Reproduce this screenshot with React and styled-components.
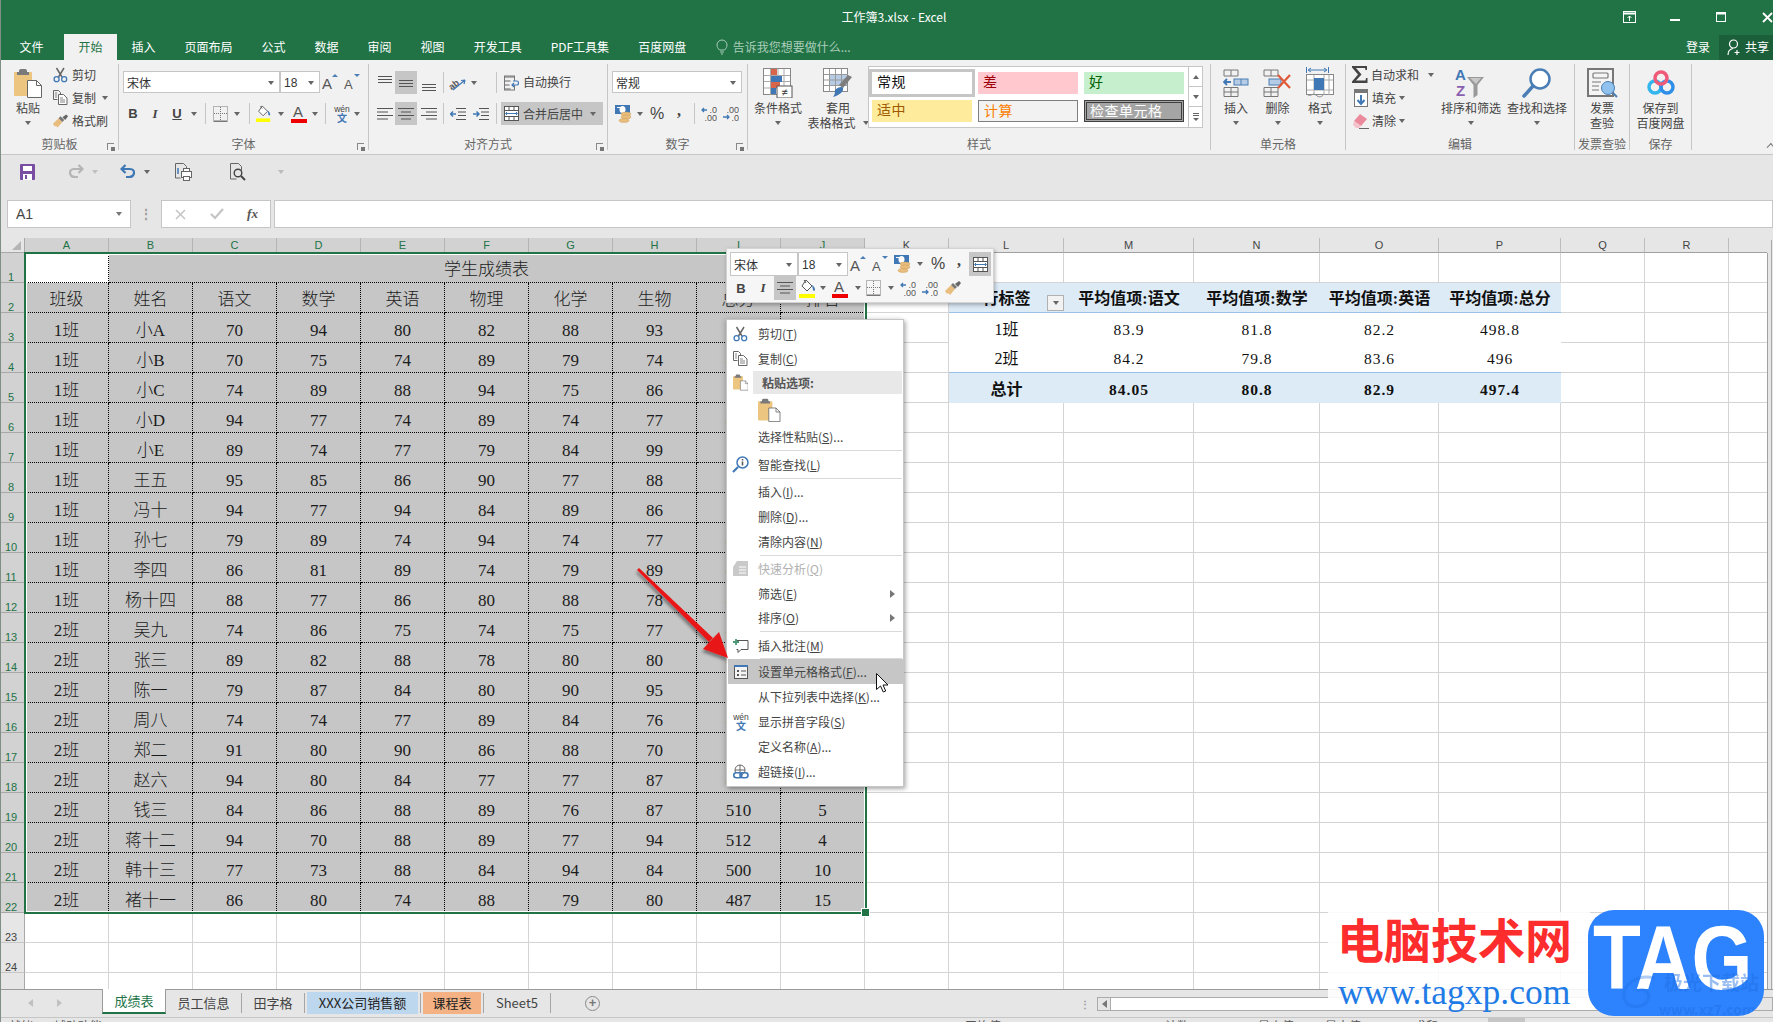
import React from "react";
import styled, { createGlobalStyle } from "styled-components";

const GlobalStyle = createGlobalStyle`
  html, body { margin: 0; padding: 0; background: #e6e6e6; }
  * { box-sizing: border-box; }
`;

const UI_FONT = `"Noto Sans CJK SC", "Liberation Sans", sans-serif`;
const CELL_FONT = `"Liberation Serif", "Noto Sans CJK SC", serif`;
const GREEN = "#217346";

const Page = styled.div`
  position: relative;
  width: 1773px;
  height: 1022px;
  overflow: hidden;
  background: #e6e6e6;
  border-left: 1px solid #7f8f86;
  font-family: ${UI_FONT};
  font-size: 12px;
  line-height: 16px;
  color: #444;
  display: flex;
  flex-direction: column;
`;

/* ---------- title bar and tabs ---------- */
const TitleBar = styled.div`
  height: 34px;
  flex: none;
  background: ${GREEN};
  color: #fff;
  display: flex;
  align-items: center;
  padding-left: 837px;
`;
const TitleText = styled.div`
  width: 112px;
  text-align: center;
  white-space: nowrap;
`;
const WindowButtons = styled.div`
  margin-left: auto;
  display: flex;
  align-items: center;
  margin-right: -17px;
`;
const WindowBtn = styled.div`
  width: 46px;
  display: flex;
  justify-content: center;
`;
const TabRow = styled.div`
  height: 26px;
  flex: none;
  background: ${GREEN};
  display: flex;
  padding-left: 4px;
`;
const Tab = styled.div`
  height: 26px;
  padding: 0 14.5px;
  line-height: 26px;
  color: ${(p) => (p.$active ? GREEN : "#fff")};
  background: ${(p) => (p.$active ? "#f1f1f1" : "transparent")};
  margin-right: ${(p) => p.$mr || 0}px;
  white-space: nowrap;
`;
const TellMe = styled.div`
  margin-left: 15px;
  display: flex;
  align-items: center;
  gap: 5px;
  color: #a9cdb9;
`;
const AccountArea = styled.div`
  margin-left: auto;
  display: flex;
  align-items: center;
  color: #fff;
`;
const Login = styled.div`
  width: 53px;
  padding-left: 20px;
`;
const ShareBtn = styled.div`
  width: 54px;
  height: 25px;
  background: #1b5e3a;
  display: flex;
  align-items: center;
  gap: 3px;
  padding-left: 8px;
  white-space: nowrap;
`;

/* ---------- ribbon ---------- */
const Ribbon = styled.div`
  height: 95px;
  flex: none;
  background: #f1f1f1;
  border-bottom: 1px solid #c6c6c6;
  padding-top: 4px;
  display: flex;
  align-items: flex-start;
`;
const Group = styled.div`
  width: ${(p) => p.$w}px;
  height: 86px;
  flex: none;
  border-right: 1px solid #c6c6c6;
  display: flex;
  flex-direction: column;
`;
const GroupBody = styled.div`
  height: 72px;
  display: flex;
  padding-left: ${(p) => p.$pl || 0}px;
  flex-direction: ${(p) => (p.$col ? "column" : "row")};
  padding-top: ${(p) => (p.$col ? 7 : 0)}px;
`;
const GroupFooter = styled.div`
  height: 14px;
  display: grid;
  grid-template-columns: ${(p) => (p.$plain ? "1fr" : "14px 1fr 14px")};
  align-items: center;
  color: #666;
  text-align: center;
  white-space: nowrap;
`;
const Launcher = styled.span`
  grid-column: 3;
  width: 7px;
  height: 7px;
  margin: 5px 0 0 3px;
  border-left: 1px solid #888;
  border-top: 1px solid #888;
  position: relative;
  &::after {
    content: "";
    position: absolute;
    right: -1px;
    bottom: -1px;
    width: 4px;
    height: 4px;
    background: #777;
  }
`;
const BigBtn = styled.div`
  width: ${(p) => p.$w}px;
  margin-left: ${(p) => p.$ml || 0}px;
  flex: none;
  display: flex;
  flex-direction: column;
  align-items: center;
  padding-top: 4px;
  white-space: nowrap;
`;
const BigIcon = styled.div`
  height: 30px;
  margin-bottom: 2px;
  display: flex;
  align-items: center;
  justify-content: center;
`;
const BigLabel = styled.div`
  height: 15px;
  line-height: 15px;
  display: flex;
  align-items: center;
  gap: 7px;
`;
const Caret = styled.span`
  display: inline-block;
  flex: none;
  width: 0;
  height: 0;
  border-left: 3px solid transparent;
  border-right: 3px solid transparent;
  border-top: 4px solid ${(p) => p.$c || "#666"};
  transform: ${(p) => (p.$up ? "rotate(180deg)" : "none")};
`;
const SmallStack = styled.div`
  margin-left: ${(p) => p.$ml || 0}px;
  margin-top: -1px;
  width: ${(p) => p.$w || 70}px;
  flex: none;
  display: flex;
  flex-direction: column;
`;
const SmallBtn = styled.div`
  height: 23px;
  display: flex;
  align-items: center;
  white-space: nowrap;
`;
const SmallIcon = styled.span`
  width: 17px;
  margin-right: 3px;
  display: flex;
  justify-content: center;
`;
const ToolRow = styled.div`
  height: ${(p) => p.$h || 23}px;
  margin-top: ${(p) => p.$mt || 0}px;
  display: flex;
  align-items: center;
`;
const Tool = styled.div`
  width: ${(p) => p.$w}px;
  height: 100%;
  margin-left: ${(p) => p.$ml || 0}px;
  flex: none;
  display: flex;
  align-items: center;
  justify-content: center;
  background: ${(p) => (p.$on ? "#c6c6c6" : "transparent")};
`;
const Divider = styled.div`
  width: ${(p) => p.$w}px;
  height: 100%;
  flex: none;
  display: flex;
  justify-content: center;
  &::after {
    content: "";
    width: 1px;
    background: #c6c6c6;
    margin: 1px 0;
  }
`;
const BoldGlyph = styled.span`
  font: 700 13px "Liberation Sans", sans-serif;
  color: #444;
`;
const ItalicGlyph = styled.span`
  font: italic 700 13px "Liberation Serif", serif;
  color: #444;
`;
const UnderGlyph = styled.span`
  font: 700 13px "Liberation Sans", sans-serif;
  color: #444;
  text-decoration: underline;
`;
const PercentGlyph = styled.span`
  font: 16px "Liberation Sans", sans-serif;
`;
const CommaGlyph = styled.span`
  font: 700 16px "Liberation Serif", serif;
  margin-top: -6px;
`;
const Combo = styled.div`
  width: ${(p) => p.$w}px;
  height: ${(p) => p.$h || 22}px;
  flex: none;
  background: #fff;
  border: 1px solid #c6c6c6;
  display: flex;
  align-items: center;
  justify-content: space-between;
  padding: 1px 5px 0 3px;
  color: #333;
  font-family: ${(p) => (p.$num ? `"Liberation Sans", sans-serif` : UI_FONT)};
`;
const WrapLabel = styled.span`
  margin-left: 1px;
  margin-top: ${(p) => p.$mt || 0}px;
  white-space: nowrap;
`;
const MergeBtn = styled.div`
  width: 102px;
  height: 23px;
  margin-left: 1px;
  background: #c6c6c6;
  display: flex;
  align-items: center;
  flex: none;
  white-space: nowrap;
`;
const Gallery = styled.div`
  width: 320px;
  height: 62px;
  margin-top: 2px;
  flex: none;
  background: #fff;
  border: 1px solid #c6c6c6;
  border-right: none;
  display: grid;
  grid-template-columns: repeat(3, 100px);
  grid-auto-rows: 22px;
  column-gap: 6px;
  row-gap: 6px;
  padding: 5px 0 0 3px;
`;
const StyleCell = styled.div`
  font: 14px/21px ${CELL_FONT};
  letter-spacing: 0.5px;
  padding-left: 5px;
  white-space: nowrap;
  background: ${(p) => p.$bg};
  color: ${(p) => p.$fg};
  border: ${(p) => p.$bd || "none"};
  box-shadow: ${(p) => (p.$sel ? "0 0 0 3px #c6c6c6" : "none")};
  outline: ${(p) => (p.$double ? "1px solid #3f3f3f" : "none")};
  outline-offset: -3px;
`;
const GalleryScroll = styled.div`
  width: 15px;
  height: 62px;
  margin-top: 2px;
  flex: none;
  border: 1px solid #c6c6c6;
  background: #fff;
  display: grid;
  grid-template-rows: repeat(3, 1fr);
`;
const GalleryArrow = styled.div`
  display: flex;
  align-items: center;
  justify-content: center;
  border-bottom: ${(p) => (p.$last ? "none" : "1px solid #c6c6c6")};
`;
const CollapseCaret = styled.div`
  align-self: flex-end;
  margin: 0 0 4px 76px;
  width: 6px;
  height: 6px;
  border-left: 1px solid #777;
  border-top: 1px solid #777;
  transform: rotate(45deg);
`;

/* ---------- quick access and formula bar ---------- */
const Qat = styled.div`
  height: 35px;
  flex: none;
  display: flex;
  align-items: center;
  padding: 0 0 2px 17px;
`;
const QatSlot = styled.div`
  width: ${(p) => p.$w}px;
  flex: none;
  display: flex;
  justify-content: center;
  opacity: ${(p) => p.$fade || 1};
`;
const FormulaRow = styled.div`
  height: 28px;
  margin: 10px 0;
  flex: none;
  display: flex;
  padding-left: 6px;
`;
const NameBox = styled.div`
  width: 124px;
  background: #fff;
  border: 1px solid #c6c6c6;
  display: flex;
  align-items: center;
  justify-content: space-between;
  padding: 0 8px;
  font: 14px "Liberation Sans", sans-serif;
  color: #444;
`;
const GripDots = styled.div`
  width: 30px;
  display: flex;
  align-items: center;
  justify-content: center;
  color: #999;
  font: 700 12px/6px "Liberation Sans", sans-serif;
`;
const FxBox = styled.div`
  width: 110px;
  background: #fff;
  border: 1px solid #c6c6c6;
  display: flex;
  align-items: center;
`;
const FxSlot = styled.div`
  width: ${(p) => p.$w}px;
  flex: none;
  display: flex;
  justify-content: center;
`;
const FxGlyph = styled.span`
  font: italic 700 13px "Liberation Serif", serif;
  color: #555;
`;
const FormulaInput = styled.div`
  flex: 1;
  margin-left: 3px;
  background: #fff;
  border: 1px solid #c6c6c6;
`;

/* ---------- grid ---------- */
const SheetArea = styled.div`
  height: 751px;
  flex: none;
  display: flex;
  background: #fff;
  overflow: hidden;
`;
const Grid = styled.div`
  position: relative;
  width: 1766px;
  flex: none;
  overflow: hidden;
  display: grid;
  grid-template-columns: 24px repeat(11, 84px) 115px 130px 126px 119px 122px 84px 84px 84px;
  grid-template-rows: 15px repeat(25, 30px);
  background: #fff;
`;
const Corner = styled.div`
  background: #e6e6e6;
  border-right: 1px solid #a8a8a8;
  border-bottom: 1px solid #a8a8a8;
  position: relative;
  &::after {
    content: "";
    position: absolute;
    right: 3px;
    bottom: 2px;
    border-left: 9px solid transparent;
    border-bottom: 9px solid #b5b5b5;
  }
`;
const ColHead = styled.div`
  background: ${(p) => (p.$sel ? "#d2d2d2" : "#e6e6e6")};
  color: ${(p) => (p.$sel ? GREEN : "#444")};
  border-right: 1px solid ${(p) => (p.$sel ? "#b4b4b4" : "#bdbdbd")};
  border-bottom: 1px solid #a0a0a0;
  font: 11px/15px "Liberation Sans", sans-serif;
  text-align: center;
`;
const RowHead = styled.div`
  background: ${(p) => (p.$sel ? "#d2d2d2" : "#e6e6e6")};
  color: ${(p) => (p.$sel ? GREEN : "#444")};
  border-bottom: 1px solid ${(p) => (p.$sel ? "#a8a8a8" : "#c6c6c6")};
  border-right: 1px solid #a8a8a8;
  font: 11px/14px "Liberation Sans", sans-serif;
  text-align: center;
  padding-top: 17px;
  padding-right: 3px;
`;
const Cell = styled.div`
  grid-column: ${(p) => (p.$span ? `span ${p.$span}` : "auto")};
  min-width: 0;
  display: flex;
  align-items: center;
  justify-content: center;
  padding-top: ${(p) => (p.$head ? 5 : 7)}px;
  font-family: ${CELL_FONT};
  font-size: 17px;
  font-weight: 300;
  line-height: 20px;
  color: #1c1c1c;
  white-space: nowrap;
  background: ${(p) => (p.$sel ? "#c6c6c6" : "#fff")};
  border-right: 1px ${(p) => (p.$sel ? "dotted #000" : "solid #d4d4d4")};
  border-bottom: 1px ${(p) => (p.$sel ? "dotted #000" : "solid #d4d4d4")};
`;
const ActiveCell = styled(Cell)`
  background: #fff;
`;
const PivotCell = styled.div`
  display: flex;
  align-items: center;
  justify-content: center;
  padding-top: 3px;
  font-family: ${CELL_FONT};
  font-size: ${(p) => (p.$head ? 16 : 15.5)}px;
  font-weight: ${(p) => (p.$strong ? 700 : 400)};
  letter-spacing: ${(p) => (p.$head ? 0 : 1)}px;
  color: #111;
  white-space: nowrap;
  background: ${(p) => (p.$strong ? "#ddebf7" : "#fff")};
  border-bottom: ${(p) => (p.$line ? "1px solid #9bc2e6" : "none")};
  position: relative;
`;
const FilterBtn = styled.span`
  position: absolute;
  right: 0;
  bottom: 1px;
  width: 17px;
  height: 16px;
  background: #f2f2f2;
  border: 1px solid #b0b0b0;
  display: flex;
  align-items: center;
  justify-content: center;
`;
const SelectionFrame = styled.div`
  position: absolute;
  left: 23px;
  top: 14px;
  width: 843px;
  height: 662px;
  border: 2px solid ${GREEN};
  box-shadow: inset 0 0 0 1px #fff;
  pointer-events: none;
  &::after {
    content: "";
    position: absolute;
    right: -5px;
    bottom: -5px;
    width: 7px;
    height: 7px;
    background: ${GREEN};
    border: 1px solid #fff;
  }
`;
const VScroll = styled.div`
  flex: 1;
  position: relative;
  background: #e6e6e6;
  &::before {
    content: "";
    position: absolute;
    left: 0;
    top: 15px;
    bottom: 0;
    width: 1px;
    background: #a0a0a0;
  }
  &::after {
    content: "";
    position: absolute;
    left: 4px;
    top: 2px;
    bottom: 0;
    width: 1px;
    background: #ababab;
  }
`;

/* ---------- sheet tabs and status bar ---------- */
const TabsBar = styled.div`
  height: 29px;
  flex: none;
  background: #e6e6e6;
  border-top: 1px solid #9a9a9a;
  border-bottom: 1px solid #c6c6c6;
  display: flex;
  align-items: flex-start;
  font-size: 13px;
`;
const TabNav = styled.div`
  width: 101px;
  height: 26px;
  flex: none;
  display: flex;
  align-items: center;
  padding-left: 27px;
  gap: 24px;
`;
const NavArrow = styled.span`
  width: 0;
  height: 0;
  border-top: 4px solid transparent;
  border-bottom: 4px solid transparent;
  ${(p) => (p.$right ? "border-left" : "border-right")}: 5px solid ${(p) => p.$c || "#c0c0c0"};
`;
const SheetTab = styled.div`
  width: ${(p) => p.$w}px;
  height: ${(p) => (p.$active ? 25 : 22)}px;
  margin: ${(p) => (p.$active ? "-1px 0 0 0" : "2px 0 0 0")};
  margin-left: ${(p) => p.$ml || 0}px;
  flex: none;
  display: flex;
  align-items: center;
  justify-content: center;
  white-space: nowrap;
  color: ${(p) => (p.$active ? GREEN : p.$bg ? "#222" : "#444")};
  background: ${(p) => (p.$active ? "#fff" : p.$bg || "transparent")};
  border-left: ${(p) => (p.$active ? "1px solid #9a9a9a" : "none")};
  border-right: ${(p) => (p.$active ? "1px solid #9a9a9a" : "none")};
  border-bottom: ${(p) => (p.$active ? `2px solid ${GREEN}` : "none")};
`;
const TabSep = styled.div`
  width: 1px;
  height: 20px;
  margin: 3px 0 0 ${(p) => p.$ml || 0}px;
  flex: none;
  background: #a6a6a6;
`;
const AddSheet = styled.div`
  margin: 6px 0 0 34px;
  width: 15px;
  height: 15px;
  flex: none;
  border: 1px solid #8a8a8a;
  border-radius: 50%;
  color: #777;
  font: 700 13px/12px "Liberation Sans", sans-serif;
  text-align: center;
`;
const HScrollArea = styled.div`
  margin-left: auto;
  padding-top: 7px;
  display: flex;
  align-items: center;
  flex: none;
`;
const HGrip = styled.div`
  width: 17px;
  color: #999;
  font: 700 10px/5px "Liberation Sans", sans-serif;
`;
const HTrack = styled.div`
  width: 676px;
  height: 14px;
  display: flex;
  border: 1px solid #ababab;
  background: #e6e6e6;
`;
const HArrowBox = styled.div`
  width: 13px;
  flex: none;
  display: flex;
  align-items: center;
  justify-content: center;
  border-right: 1px solid #ababab;
`;
const HThumb = styled.div`
  width: 505px;
  background: #fff;
  border-right: 1px solid #ababab;
`;
const StatusBar = styled.div`
  flex: 1;
  min-height: 0;
  position: relative;
  overflow: hidden;
  display: flex;
  padding-top: 1px;
  color: #555;
  line-height: 14px;
  white-space: nowrap;
`;
const StatusText = styled.span`
  width: ${(p) => p.$w}px;
  margin-left: ${(p) => p.$ml || 0}px;
  flex: none;
`;
const ViewBtn = styled.span`
  width: 37px;
  margin-left: ${(p) => p.$ml || 0}px;
  margin-top: -1px;
  flex: none;
  background: ${(p) => (p.$on ? "#c6c6c6" : "transparent")};
`;

/* ---------- floating parts ---------- */
const MiniBar = styled.div`
  position: absolute;
  left: 725px;
  top: 248px;
  width: 268px;
  height: 55px;
  background: #f6f6f6;
  border: 1px solid #d4d4d4;
  box-shadow: 1px 2px 4px rgba(0, 0, 0, 0.3);
  padding: 3px 0 0 3px;
  z-index: 3;
`;
const MiniRow = styled.div`
  height: 24px;
  display: flex;
  align-items: center;
`;
const Menu = styled.div`
  position: absolute;
  left: 725px;
  top: 319px;
  width: 178px;
  height: 468px;
  background: #fff;
  border: 1px solid #c6c6c6;
  box-shadow: 2px 2px 4px rgba(0, 0, 0, 0.28), -2px 0 5px rgba(0, 0, 0, 0.14);
  padding-top: 1px;
  z-index: 3;
`;
const MenuItem = styled.div`
  height: ${(p) => p.$h || 25}px;
  display: flex;
  align-items: center;
  white-space: nowrap;
  color: ${(p) => (p.$off ? "#b1b1b1" : "#444")};
  background: ${(p) => (p.$hot ? "#c6c6c6" : "transparent")};
  margin: 0 0 0 1px;
  & u {
    text-underline-offset: 1px;
  }
`;
const MenuIcon = styled.span`
  width: 25px;
  margin-right: 5px;
  flex: none;
  display: flex;
  justify-content: center;
`;
const MenuHead = styled.span`
  flex: 1;
  height: 23px;
  margin: 0 1px 0 -5px;
  background: #e8e8e8;
  padding-left: 9px;
  line-height: 23px;
  font-weight: 700;
  color: #555;
`;
const PasteRow = styled.div`
  height: 30px;
  margin-top: 1px;
  padding: 3px 0 0 31px;
`;
const MenuSep = styled.div`
  height: ${(p) => p.$h || 2}px;
  margin-left: 33px;
  margin-right: 1px;
  display: flex;
  align-items: center;
  &::after {
    content: "";
    flex: 1;
    height: 1px;
    background: #d9d9d9;
  }
`;
const SubArrow = styled.span`
  margin-left: auto;
  margin-right: 8px;
  width: 0;
  height: 0;
  border-top: 4px solid transparent;
  border-bottom: 4px solid transparent;
  border-left: 5px solid #777;
`;
const Overlay = styled.svg`
  position: absolute;
  left: ${(p) => p.$x}px;
  top: ${(p) => p.$y}px;
  z-index: 4;
  overflow: visible;
`;
const WatermarkPanel = styled.div`
  position: absolute;
  left: 1327px;
  top: 912px;
  width: 262px;
  height: 95px;
  background: rgba(255, 255, 255, 0.88);
  z-index: 5;
  padding-left: 9px;
`;
const WatermarkTitle = styled.div`
  font: 700 47px/52px "Noto Sans CJK SC", sans-serif;
  color: #fd2d2d;
  white-space: nowrap;
`;
const WatermarkUrl = styled.div`
  font: 35.5px/38px "Liberation Serif", serif;
  color: #1f7be6;
  white-space: nowrap;
  margin: 9px 0 0 1px;
`;
const TagBadge = styled.div`
  position: absolute;
  left: 1587px;
  top: 910px;
  width: 176px;
  height: 106px;
  border-radius: 26px;
  background: #2d82fe;
  z-index: 6;
  overflow: hidden;
`;
const TagWord = styled.div`
  position: absolute;
  left: 5px;
  top: -2px;
  font: 700 90px/100px "Liberation Sans", sans-serif;
  color: #fff;
  transform: scaleX(0.87);
  transform-origin: left top;
`;
const TagFaint = styled.div`
  position: absolute;
  left: ${(p) => p.$x}px;
  top: ${(p) => p.$y}px;
  font: 700 ${(p) => p.$s}px/1 "Noto Sans CJK SC", "Liberation Sans", sans-serif;
  color: #1f6fe0;
  white-space: nowrap;
  opacity: 0.45;
`;
const TagSwirl = styled.svg`
  position: absolute;
  left: 30px;
  top: 62px;
  opacity: 0.35;
`;

/* ---------- icons ---------- */
const Scissors = () => (
  <svg width="15" height="16" viewBox="0 0 15 16" fill="none">
    <path d="M3.500 1l5.500 9M11 1L5.500 10" stroke="#666" strokeWidth="1.500" />
    <circle cx="3.600" cy="12.200" r="2.500" stroke="#3f78b5" strokeWidth="1.300" />
    <circle cx="11.200" cy="12.200" r="2.500" stroke="#3f78b5" strokeWidth="1.300" />
  </svg>
);
const CopyIcon = () => (
  <svg width="15" height="15" viewBox="0 0 15 15" fill="none" stroke="#666">
    <path d="M.5.500h5l2 2v2M.5.500v9h4" />
    <path d="M5.500 4.500h5l3.500 3.500v6.500H5.500z" fill="#fff" />
    <path d="M7 8h3M7 10h5M7 12h5M2 3h2M2 5h2M2 7h2" strokeWidth=".8" />
  </svg>
);
const BrushIcon = () => (
  <svg width="18" height="16" viewBox="0 0 18 16">
    <path d="M1 11l6-6 4 4-5 6-2-2-1 1z" fill="#e8bd7d" />
    <path d="M7 5l2-2 4 4-2 2z" fill="#777" />
    <path d="M11 4l4-3 2 2-3 4z" fill="#666" />
  </svg>
);
const PasteIcon = ({ s = 1 }) => (
  <svg width={29 * s} height={30 * s} viewBox="0 0 29 30">
    <rect x="0" y="4" width="18" height="24" rx="1" fill="#ecc581" />
    <path d="M5 4V2.500C5 1 7 1 7.500 1h3C12 1 13 1.500 13 3v1h2v3H3V4z" fill="#7a7a7a" />
    <path d="M13.500 12.500h9l5 5v12h-14z" fill="#fff" stroke="#666" />
    <path d="M22.500 12.500v5h5" fill="none" stroke="#666" />
  </svg>
);
const FontSizeIcon = ({ up }) => (
  <svg width="20" height="18" viewBox="0 0 20 18">
    <text x="1" y="16" fontFamily="Liberation Sans" fontSize={up ? 15 : 13} fill="#555">A</text>
    <path d={up ? "M11 4l3-3 3 3z" : "M11 1l3 3 3-3z"} fill="#4a7eb5" />
  </svg>
);
const BorderIcon = () => (
  <svg width="16" height="16" viewBox="0 0 16 16" stroke="#777" fill="none" strokeDasharray="1 1">
    <rect x=".5" y=".5" width="14" height="14" />
    <path d="M7.500 1v14M1 7.500h14" />
    <path d="M.5 15.500h14" strokeDasharray="none" />
  </svg>
);
const FillIcon = () => (
  <svg width="18" height="19" viewBox="0 0 18 19">
    <path d="M7 1l6 6-5 5-5-5z" fill="#fff" stroke="#555" />
    <path d="M5 1l2 3" stroke="#555" />
    <path d="M13 6c2 1 3 3 3 5 0 1-2 1-2 0z" fill="#3f78b5" />
    <rect x="0" y="15" width="16" height="4" fill="#ffff00" />
  </svg>
);
const FontColorIcon = () => (
  <svg width="16" height="19" viewBox="0 0 16 19">
    <text x="2" y="13" fontFamily="Liberation Sans" fontSize="15" fill="#555">A</text>
    <rect x="0" y="15" width="16" height="4" fill="#ee0000" />
  </svg>
);
const WenIcon = () => (
  <svg width="18" height="20" viewBox="0 0 18 20">
    <text x="9" y="8" textAnchor="middle" fontFamily="Liberation Sans" fontSize="8.500" fill="#444">wén</text>
    <text x="9" y="18" textAnchor="middle" fontFamily="Noto Sans CJK SC" fontWeight="700" fontSize="10" fill="#3f78b5">文</text>
  </svg>
);
const Lines = ({ type = "center" }) => {
  const widths = { left: [16, 11, 16, 11], center: [16, 10, 16, 10], right: [16, 11, 16, 11] }[type];
  return (
    <svg width="16" height="14" viewBox="0 0 16 14" stroke="#555">
      {widths.map((w, i) => {
        const x = type === "left" ? 0 : type === "right" ? 16 - w : (16 - w) / 2;
        return <path key={i} d={`M${x} ${1.5 + i * 3.5}h${w}`} />;
      })}
    </svg>
  );
};
const VAlign = ({ pos }) => (
  <svg width="16" height="18" viewBox="0 0 16 18" stroke="#555">
    <g transform={`translate(0 ${pos === "top" ? 2 : pos === "mid" ? 6 : 10})`}>
      <path d="M1 .5h14M1 3.500h14M1 6.500h14" />
    </g>
  </svg>
);
const OrientIcon = () => (
  <svg width="18" height="16" viewBox="0 0 18 16" fill="none">
    <text x="0" y="12" transform="rotate(-38 6 10)" fontFamily="Liberation Sans" fontSize="9" fontWeight="700" fill="#555">ab</text>
    <path d="M4 15L16 5M16 5l-4 .5M16 5l-1 4" stroke="#3f78b5" strokeWidth="1.200" />
  </svg>
);
const WrapIcon = () => (
  <svg width="15" height="16" viewBox="0 0 15 16" fill="none">
    <path d="M.5 2h10M.5 6h6M.5 10h5M.5 14h6" stroke="#666" strokeWidth="1" />
    <rect x=".5" y="1" width="10" height="14" stroke="#777" />
    <path d="M9 6h4c2 0 2 4 0 4H8M10 8l-2 2 2 2" stroke="#3f78b5" strokeWidth="1.200" fill="#f1f1f1" />
  </svg>
);
const MergeIcon = () => (
  <svg width="15" height="15" viewBox="0 0 15 15" fill="none" stroke="#555">
    <rect x=".5" y=".5" width="14" height="14" fill="#fff" />
    <path d="M.5 4.500h14M.5 10.500h14M5 .5v4M10 .5v4M5 10.500v4M10 10.500v4" />
    <path d="M2 7.500h11M3 6l-1.500 1.500L3 9M12 6l1.500 1.500L12 9" stroke="#3f78b5" />
  </svg>
);
const IndentIcon = ({ dir }) => (
  <svg width="16" height="14" viewBox="0 0 16 14" fill="none">
    <path d="M6 1.500h10M8 5h8M8 8.500h8M6 12.500h10" stroke="#555" />
    <path d={dir === "in" ? "M0 7h6M3.500 4.500L6 7l-2.500 2.500" : "M6 7H.5M3 4.500L.5 7 3 9.500"} stroke="#3f78b5" strokeWidth="1.500" />
  </svg>
);
const CurrencyIcon = () => (
  <svg width="17" height="18" viewBox="0 0 17 18">
    <rect x="0" y="0" width="15" height="9" fill="#3f78b5" />
    <ellipse cx="7.500" cy="4.500" rx="3" ry="3.500" fill="#fff" />
    <rect x="2" y="2" width="3" height="1" fill="#fff" />
    <g fill="#e8bd7d" stroke="#c99b52" strokeWidth=".4">
      <ellipse cx="11" cy="9" rx="5" ry="2" />
      <ellipse cx="11" cy="12" rx="5" ry="2" />
      <ellipse cx="9" cy="15.500" rx="5" ry="2" />
    </g>
  </svg>
);
const DecimalIcon = ({ inc }) => (
  <svg width="16" height="15" viewBox="0 0 16 15">
    <text x="16" y="6.500" textAnchor="end" fontFamily="Liberation Sans" fontSize="9" fill="#555">{inc ? ".0" : ".00"}</text>
    <text x="16" y="14.500" textAnchor="end" fontFamily="Liberation Sans" fontSize="9" fill="#555">{inc ? ".00" : ".0"}</text>
    <path d={inc ? "M6 4H1M3 2L1 4l2 2" : "M0 11h6M4 9l2 2-2 2"} stroke="#3f78b5" strokeWidth="1.300" fill="none" />
  </svg>
);
const CondFormatIcon = () => (
  <svg width="30" height="30" viewBox="0 0 30 30">
    <rect x=".5" y=".5" width="27" height="26" fill="#fff" stroke="#888" />
    <path d="M7.500 1v26M15 1v26M21 1v26M1 7.500h26M1 13.500h26M1 20h26" stroke="#aaa" />
    <rect x="8" y="1" width="6" height="6" fill="#d9664a" />
    <rect x="8" y="8" width="11" height="6" fill="#3f78b5" />
    <rect x="8" y="14" width="9" height="6" fill="#d9664a" />
    <rect x="8" y="20" width="5" height="6" fill="#3f78b5" />
    <rect x="14" y="18" width="15" height="12" fill="#fff" stroke="#555" />
    <text x="21.500" y="28" textAnchor="middle" fontFamily="Liberation Sans" fontSize="11" fill="#333">≠</text>
  </svg>
);
const TableFormatIcon = () => (
  <svg width="30" height="30" viewBox="0 0 30 30">
    <rect x=".5" y=".5" width="24" height="23" fill="#fff" stroke="#888" />
    <rect x="6" y="6" width="18" height="11" fill="#b5cbe6" />
    <path d="M6.500 1v23M12.500 1v23M18.500 1v23M1 6.500h24M1 12h24M1 17.500h24" stroke="#999" />
    <path d="M16 17l9-10 4 2-9 11z" fill="#7d7d7d" />
    <path d="M12 22c3-3 7-4 8-2 1 3-3 7-10 9 2-2 2-5 2-7z" fill="#3f78b5" />
  </svg>
);
const InsertCellIcon = () => (
  <svg width="26" height="28" viewBox="0 0 26 28" fill="none">
    <path d="M1 1h14v6H1zM8 1v6M1 18.500h14v9H1zM8 18.500v9M1 23h14" stroke="#777" />
    <rect x="11" y="10" width="14" height="6" fill="#b5cbe6" stroke="#4a7eb5" />
    <path d="M18 10v6" stroke="#4a7eb5" />
    <path d="M8 13H1M4 10l-3 3 3 3" stroke="#3f78b5" strokeWidth="1.800" />
  </svg>
);
const DeleteCellIcon = () => (
  <svg width="30" height="28" viewBox="0 0 30 28" fill="none">
    <path d="M1 1h14v6H1zM8 1v6M1 18.500h14v9H1zM8 18.500v9M1 23h14" stroke="#777" />
    <rect x="6" y="10" width="12" height="6" fill="#b5cbe6" stroke="#4a7eb5" />
    <path d="M15 6l12 13M27 6L15 19" stroke="#e05a38" strokeWidth="2.200" />
  </svg>
);
const FormatCellIcon = () => (
  <svg width="28" height="32" viewBox="0 0 28 32" fill="none">
    <path d="M.5 0v6M22.500 0v6M3 3h17M5 1L2 3l3 2M18 1l3 2-3 2" stroke="#3f78b5" />
    <rect x=".5" y="7.500" width="27" height="20" fill="#fff" stroke="#888" />
    <path d="M8 8v20M18 8v20M23 8v20M1 13h26M1 23h26" stroke="#aaa" />
    <rect x="8" y="11" width="10" height="12" fill="#3f78b5" />
    <path d="M1 27c3 4 6-2 9 1s6 2 8-1" stroke="#888" />
  </svg>
);
const SigmaIcon = () => (
  <svg width="16" height="17" viewBox="0 0 16 17">
    <path d="M0 0h15v4h-1.500l-.5-2H4l5.500 6.500L4 14.500h9.500l.5-2.500h1.500v5H0v-1.500L6 8.500 0 1.500z" fill="#444" />
  </svg>
);
const FillDownIcon = () => (
  <svg width="14" height="18" viewBox="0 0 14 18" fill="none">
    <rect x=".5" y=".5" width="13" height="17" fill="#fff" stroke="#777" />
    <rect x="1" y="1" width="12" height="3" fill="#777" />
    <path d="M7 6v9M3.500 11L7 15l3.500-4" stroke="#3f78b5" strokeWidth="2" />
  </svg>
);
const EraserIcon = () => (
  <svg width="16" height="16" viewBox="0 0 16 16">
    <path d="M7 1l7 5-6 7-7-5z" fill="#ea8a9c" />
    <path d="M1 8l7 5-2 2H3L0 12z" fill="#f3c2cb" />
    <path d="M6 15.500h10" stroke="#666" />
  </svg>
);
const SortFilterIcon = () => (
  <svg width="32" height="32" viewBox="0 0 32 32">
    <text x="0" y="13" fontFamily="Liberation Sans" fontWeight="700" fontSize="15" fill="#3f78b5">A</text>
    <text x="1" y="29" fontFamily="Liberation Sans" fontWeight="700" fontSize="15" fill="#8a5fb0">Z</text>
    <path d="M12 10h17l-6.500 8v10l-4 3V18z" fill="#999" />
    <path d="M15 11h11l-5 6z" fill="#c8c8c8" />
  </svg>
);
const FindIcon = () => (
  <svg width="30" height="32" viewBox="0 0 30 32" fill="none">
    <circle cx="18" cy="12" r="9.500" fill="#fff" stroke="#4a7eb5" strokeWidth="2.500" />
    <path d="M11 19L2 29" stroke="#4a7eb5" strokeWidth="3.500" strokeLinecap="round" />
  </svg>
);
const InvoiceIcon = () => (
  <svg width="31" height="30" viewBox="0 0 31 30" fill="none">
    <rect x="1" y="1" width="25" height="27" fill="#f4f4f4" stroke="#777" strokeWidth="2" />
    <rect x="6" y="5" width="15" height="5" rx="1" stroke="#777" strokeWidth="1.200" />
    <path d="M5 14h9M5 18h7M5 22h7" stroke="#777" />
    <circle cx="21" cy="20" r="6.500" fill="#8fc2ee" stroke="#4a7eb5" />
    <path d="M26 25l4 4" stroke="#4a7eb5" strokeWidth="2" />
  </svg>
);
const BaiduIcon = () => (
  <svg width="28" height="26" viewBox="0 0 28 26" fill="none">
    <circle cx="8" cy="17" r="6" stroke="#33b6ee" strokeWidth="3.500" />
    <circle cx="20" cy="17" r="6" stroke="#2f8fe8" strokeWidth="3.500" />
    <circle cx="14" cy="8" r="6" stroke="#ee5a78" strokeWidth="3.500" />
  </svg>
);
const SaveIcon = () => (
  <svg width="15" height="16" viewBox="0 0 15 16">
    <rect x="0" y="0" width="15" height="16" rx="1" fill="#7a4fa3" />
    <rect x="3" y="2" width="9" height="5" fill="#fff" />
    <rect x="3" y="10" width="9" height="6" fill="#fff" />
    <rect x="5" y="11" width="2" height="4" fill="#7a4fa3" />
  </svg>
);
const UndoIcon = ({ color, flip }) => (
  <svg width="16" height="15" viewBox="0 0 16 15" fill="none" style={flip ? { transform: "scaleX(-1)" } : undefined}>
    <path d="M2 5h8c6 0 5 8-1 8H6" stroke={color} strokeWidth="2.200" />
    <path d="M5.500 1L1.500 5l4 4" stroke={color} strokeWidth="2.200" />
  </svg>
);
const PrintPreviewIcon = () => (
  <svg width="18" height="18" viewBox="0 0 18 18" fill="none" stroke="#666">
    <path d="M.5.500h8l3 3V8M.5.500V15h5" />
    <path d="M3 5v6" stroke="#3f78b5" strokeWidth="1.500" />
    <rect x="6.500" y="8.500" width="10" height="6" fill="#fff" />
    <rect x="8.500" y="5.500" width="6" height="3" fill="#fff" />
    <rect x="8.500" y="13.500" width="6" height="4" fill="#fff" />
  </svg>
);
const SearchDocIcon = () => (
  <svg width="16" height="18" viewBox="0 0 16 18" fill="none" stroke="#666">
    <path d="M.5.500h8l3 3v4M.5.500V16h6" />
    <circle cx="8" cy="10" r="3.800" stroke="#444" strokeWidth="1.400" />
    <path d="M11 13l4 4" stroke="#444" strokeWidth="2" />
  </svg>
);
const SmartLookupIcon = () => (
  <svg width="17" height="17" viewBox="0 0 17 17" fill="none">
    <circle cx="10.500" cy="6.500" r="5.500" fill="#fff" stroke="#3f78b5" strokeWidth="1.500" />
    <path d="M6 11l-5 5" stroke="#3f78b5" strokeWidth="2.200" />
    <path d="M10.500 5.500v4M10.500 3v1.500" stroke="#555" strokeWidth="1.500" />
  </svg>
);
const QuickAnalysisIcon = () => (
  <svg width="15" height="15" viewBox="0 0 15 15" fill="#c9c9c9">
    <path d="M4 0h11v15H0V6z" />
    <path d="M6 6h7M6 9h7M6 12h7" stroke="#fff" />
  </svg>
);
const CommentIcon = () => (
  <svg width="16" height="14" viewBox="0 0 16 14" fill="none">
    <path d="M3.500 1.500H15v9H8l-3 3v-3H3.500" stroke="#555" fill="#fff" />
    <path d="M0 3h6M3 0v6" stroke="#4a9a78" strokeWidth="1.800" />
  </svg>
);
const FormatCellsIcon = () => (
  <svg width="14" height="14" viewBox="0 0 14 14">
    <rect x=".5" y=".5" width="13" height="13" fill="#f4f4f4" stroke="#555" />
    <rect x="0" y="0" width="14" height="2" fill="#3f78b5" />
    <path d="M3 5h2v2H3zM3 9h2v2H3z" fill="#555" />
    <path d="M7 6h5M7 10h5" stroke="#555" />
  </svg>
);
const LinkIcon = () => (
  <svg width="16" height="16" viewBox="0 0 16 16" fill="none">
    <circle cx="7" cy="6" r="5" stroke="#666" />
    <path d="M2 6h10M7 1v10" stroke="#666" />
    <rect x=".8" y="8.800" width="8" height="5" rx="2.500" stroke="#3f78b5" strokeWidth="1.600" fill="#fff" />
    <rect x="7" y="8.800" width="8" height="5" rx="2.500" stroke="#3f78b5" strokeWidth="1.600" />
  </svg>
);

/* ---------- data ---------- */
const COLUMNS = ["A", "B", "C", "D", "E", "F", "G", "H", "I", "J", "K", "L", "M", "N", "O", "P", "Q", "R", "S"];
const HEADERS = ["班级", "姓名", "语文", "数学", "英语", "物理", "化学", "生物", "总分", "排名"];
const STUDENTS = [
  ["1班", "小A", 70, 94, 80, 82, 88, 93, 507, 6],
  ["1班", "小B", 70, 75, 74, 89, 79, 74, 461, 19],
  ["1班", "小C", 74, 89, 88, 94, 75, 86, 506, 7],
  ["1班", "小D", 94, 77, 74, 89, 74, 77, 485, 17],
  ["1班", "小E", 89, 74, 77, 79, 84, 99, 502, 9],
  ["1班", "王五", 95, 85, 86, 90, 77, 88, 521, 2],
  ["1班", "冯十", 94, 77, 94, 84, 89, 86, 524, 1],
  ["1班", "孙七", 79, 89, 74, 94, 74, 77, 487, 15],
  ["1班", "李四", 86, 81, 89, 74, 79, 89, 498, 12],
  ["1班", "杨十四", 88, 77, 86, 80, 88, 78, 497, 13],
  ["2班", "吴九", 74, 86, 75, 74, 75, 77, 461, 19],
  ["2班", "张三", 89, 82, 88, 78, 80, 80, 497, 13],
  ["2班", "陈一", 79, 87, 84, 80, 90, 95, 515, 3],
  ["2班", "周八", 74, 74, 77, 89, 84, 76, 474, 18],
  ["2班", "郑二", 91, 80, 90, 86, 88, 70, 505, 8],
  ["2班", "赵六", 94, 80, 84, 77, 77, 87, 499, 11],
  ["2班", "钱三", 84, 86, 88, 89, 76, 87, 510, 5],
  ["2班", "蒋十二", 94, 70, 88, 89, 77, 94, 512, 4],
  ["2班", "韩十三", 77, 73, 88, 84, 94, 84, 500, 10],
  ["2班", "褚十一", 86, 80, 74, 88, 79, 80, 487, 15],
];
const PIVOT = {
  3: ["1班", "83.9", "81.8", "82.2", "498.8"],
  4: ["2班", "84.2", "79.8", "83.6", "496"],
  5: ["总计", "84.05", "80.8", "82.9", "497.4"],
};
const PIVOT_HEAD = ["平均值项:语文", "平均值项:数学", "平均值项:英语", "平均值项:总分"];
const TABS = ["开始", "插入", "页面布局", "公式", "数据", "审阅", "视图", "开发工具", "PDF工具集", "百度网盘"];

const plainCells = (row, from, to) => {
  const out = [];
  for (let c = from; c < to; c++) out.push(<Cell key={`${row}-${c}`} />);
  return out;
};

function sheetRows() {
  const rows = [];
  for (let r = 1; r <= 25; r++) {
    const selected = r <= 22;
    const cells = [<RowHead key={`h${r}`} $sel={selected}>{r}</RowHead>];
    if (r === 1) {
      cells.push(<ActiveCell key="a1" $sel />);
      cells.push(<Cell key="title" $sel $head $span={9}>学生成绩表</Cell>);
    } else if (r === 2) {
      HEADERS.forEach((h) => cells.push(<Cell key={h} $sel $head>{h}</Cell>));
    } else if (selected) {
      STUDENTS[r - 3].forEach((v, i) => cells.push(<Cell key={`${r}-${i}`} $sel>{v}</Cell>));
    } else {
      cells.push(...plainCells(r, 0, 10));
    }
    cells.push(...plainCells(r, 10, 11));
    if (r === 2) {
      cells.push(
        <PivotCell key="pl" $strong $head $line>行标签
          <FilterBtn><Caret /></FilterBtn>
        </PivotCell>
      );
      PIVOT_HEAD.forEach((h) => cells.push(<PivotCell key={h} $strong $head $line>{h}</PivotCell>));
    } else if (PIVOT[r]) {
      PIVOT[r].forEach((v, i) => (
        cells.push(<PivotCell key={`${r}p${i}`} $strong={r === 5} $line={r === 4} $head={i === 0}>{v}</PivotCell>)
      ));
    } else {
      cells.push(...plainCells(r, 11, 16));
    }
    cells.push(...plainCells(r, 16, 19));
    rows.push(...cells);
  }
  return rows;
}

const MENU_KEY = (text, key, tail = "") => <>{text}(<u>{key}</u>){tail}</>;

export default function App() {
  return (
    <Page>
      <GlobalStyle />
      <TitleBar>
        <TitleText>工作簿3.xlsx - Excel</TitleText>
        <WindowButtons>
          <WindowBtn>
            <svg width="13" height="12" viewBox="0 0 13 12" fill="none" stroke="#fff">
              <rect x=".5" y=".5" width="12" height="11" />
              <path d="M1 2.500h11" strokeWidth="2" />
              <path d="M6.500 10V5M4.500 7l2-2 2 2" />
            </svg>
          </WindowBtn>
          <WindowBtn>
            <svg width="10" height="10" viewBox="0 0 10 10"><rect y="7" width="10" height="2" fill="#fff" /></svg>
          </WindowBtn>
          <WindowBtn>
            <svg width="11" height="11" viewBox="0 0 11 11" fill="none" stroke="#fff">
              <rect x=".5" y=".5" width="9" height="9" />
              <path d="M0 1.500h10" strokeWidth="2" />
            </svg>
          </WindowBtn>
          <WindowBtn>
            <svg width="11" height="11" viewBox="0 0 11 11" stroke="#fff" strokeWidth="1.800"><path d="M1 1l9 9M10 1l-9 9" /></svg>
          </WindowBtn>
        </WindowButtons>
      </TitleBar>

      <TabRow>
        <Tab $mr={6}>文件</Tab>
        {TABS.map((t, i) => <Tab key={t} $active={i === 0}>{t}</Tab>)}
        <TellMe>
          <svg width="12" height="16" viewBox="0 0 12 16" fill="none" stroke="#a9cdb9">
            <path d="M3.500 11C2 9.500 1 8 1 6a5 5 0 0 1 10 0c0 2-1 3.500-2.500 5z" />
            <path d="M4 13h4M5 15h2" />
          </svg>
          告诉我您想要做什么...
        </TellMe>
        <AccountArea>
          <Login>登录</Login>
          <ShareBtn>
            <svg width="15" height="17" viewBox="0 0 15 17" fill="none" stroke="#fff" strokeWidth="1.200">
              <circle cx="6.500" cy="5" r="4" />
              <path d="M1 16c0-4 2-6 5-6.500M10 11v5M7.500 13.500h5" />
            </svg>
            共享
          </ShareBtn>
        </AccountArea>
      </TabRow>

      <Ribbon>
        <Group $w={118}>
          <GroupBody>
            <BigBtn $w={38} $ml={8}>
              <BigIcon><PasteIcon /></BigIcon>
              <BigLabel>粘贴</BigLabel>
              <BigLabel><Caret /></BigLabel>
            </BigBtn>
            <SmallStack $ml={5} $w={66}>
              <SmallBtn><SmallIcon><Scissors /></SmallIcon>剪切</SmallBtn>
              <SmallBtn><SmallIcon><CopyIcon /></SmallIcon>复制<Tool $w={18}><Caret /></Tool></SmallBtn>
              <SmallBtn><SmallIcon><BrushIcon /></SmallIcon>格式刷</SmallBtn>
            </SmallStack>
          </GroupBody>
          <GroupFooter><span />剪贴板<Launcher /></GroupFooter>
        </Group>

        <Group $w={250}>
          <GroupBody $col $pl={4}>
            <ToolRow $h={22}>
              <Combo $w={157}>宋体<Caret /></Combo>
              <Combo $w={40} $num>18<Caret /></Combo>
              <Tool $w={22}><FontSizeIcon up /></Tool>
              <Tool $w={22}><FontSizeIcon /></Tool>
            </ToolRow>
            <ToolRow $mt={9}>
              <Tool $w={20}><BoldGlyph>B</BoldGlyph></Tool>
              <Tool $w={24}><ItalicGlyph>I</ItalicGlyph></Tool>
              <Tool $w={20}><UnderGlyph>U</UnderGlyph></Tool>
              <Tool $w={14}><Caret /></Tool>
              <Divider $w={9} />
              <Tool $w={22}><BorderIcon /></Tool>
              <Tool $w={10}><Caret /></Tool>
              <Divider $w={14} />
              <Tool $w={16}><FillIcon /></Tool>
              <Tool $w={17}><Caret /></Tool>
              <Tool $w={19}><FontColorIcon /></Tool>
              <Tool $w={13}><Caret /></Tool>
              <Divider $w={9} />
              <Tool $w={24}><WenIcon /></Tool>
              <Tool $w={6}><Caret /></Tool>
            </ToolRow>
          </GroupBody>
          <GroupFooter><span />字体<Launcher /></GroupFooter>
        </Group>

        <Group $w={239}>
          <GroupBody $col $pl={5}>
            <ToolRow $h={23}>
              <Tool $w={21}><VAlign pos="top" /></Tool>
              <Tool $w={22} $on><VAlign pos="mid" /></Tool>
              <Tool $w={23}><VAlign pos="bot" /></Tool>
              <Divider $w={6} />
              <Tool $w={24}><OrientIcon /></Tool>
              <Tool $w={8}><Caret /></Tool>
              <Tool $w={14} />
              <Divider $w={8} />
              <Tool $w={22}><WrapIcon /></Tool>
              <WrapLabel $mt={-2}>自动换行</WrapLabel>
            </ToolRow>
            <ToolRow $mt={8}>
              <Tool $w={21}><Lines type="left" /></Tool>
              <Tool $w={22} $on><Lines type="center" /></Tool>
              <Tool $w={23}><Lines type="right" /></Tool>
              <Divider $w={6} />
              <Tool $w={24}><IndentIcon dir="out" /></Tool>
              <Tool $w={22}><IndentIcon dir="in" /></Tool>
              <Divider $w={8} />
              <MergeBtn>
                <Tool $w={21}><MergeIcon /></Tool>
                <WrapLabel>合并后居中</WrapLabel>
                <Tool $w={20}><Caret /></Tool>
              </MergeBtn>
            </ToolRow>
          </GroupBody>
          <GroupFooter><span />对齐方式<Launcher /></GroupFooter>
        </Group>

        <Group $w={140}>
          <GroupBody $col $pl={4}>
            <ToolRow $h={22}><Combo $w={130}>常规<Caret /></Combo></ToolRow>
            <ToolRow $mt={9}>
              <Tool $w={22}><CurrencyIcon /></Tool>
              <Tool $w={12}><Caret /></Tool>
              <Tool $w={22}><PercentGlyph>%</PercentGlyph></Tool>
              <Tool $w={22}><CommaGlyph>,</CommaGlyph></Tool>
              <Divider $w={9} />
              <Tool $w={20}><DecimalIcon inc /></Tool>
              <Tool $w={24}><DecimalIcon /></Tool>
            </ToolRow>
          </GroupBody>
          <GroupFooter><span />数字<Launcher /></GroupFooter>
        </Group>

        <Group $w={463}>
          <GroupBody>
            <BigBtn $w={60}>
              <BigIcon><CondFormatIcon /></BigIcon>
              <BigLabel>条件格式</BigLabel>
              <BigLabel><Caret /></BigLabel>
            </BigBtn>
            <BigBtn $w={60}>
              <BigIcon><TableFormatIcon /></BigIcon>
              <BigLabel>套用</BigLabel>
              <BigLabel>表格格式<Caret /></BigLabel>
            </BigBtn>
            <Gallery>
              <StyleCell $bg="#fff" $fg="#111" $sel>常规</StyleCell>
              <StyleCell $bg="#ffc7ce" $fg="#9c0006">差</StyleCell>
              <StyleCell $bg="#c6efce" $fg="#006100">好</StyleCell>
              <StyleCell $bg="#ffeb9c" $fg="#9c5700">适中</StyleCell>
              <StyleCell $bg="#f2f2f2" $fg="#fa7d00" $bd="1px solid #7f7f7f">计算</StyleCell>
              <StyleCell $bg="#a5a5a5" $fg="#fff" $bd="1px solid #3f3f3f" $double>检查单元格</StyleCell>
            </Gallery>
            <GalleryScroll>
              <GalleryArrow><Caret $up /></GalleryArrow>
              <GalleryArrow><Caret /></GalleryArrow>
              <GalleryArrow $last>
                <svg width="8" height="9" viewBox="0 0 8 9"><path d="M1 .5h6M1 2.500h6" stroke="#666" /><path d="M1 5h6L4 8z" fill="#666" /></svg>
              </GalleryArrow>
            </GalleryScroll>
          </GroupBody>
          <GroupFooter><span />样式<span /></GroupFooter>
        </Group>

        <Group $w={135}>
          <GroupBody $pl={4}>
            <BigBtn $w={42}>
              <BigIcon><InsertCellIcon /></BigIcon>
              <BigLabel>插入</BigLabel>
              <BigLabel><Caret /></BigLabel>
            </BigBtn>
            <BigBtn $w={41}>
              <BigIcon><DeleteCellIcon /></BigIcon>
              <BigLabel>删除</BigLabel>
              <BigLabel><Caret /></BigLabel>
            </BigBtn>
            <BigBtn $w={44}>
              <BigIcon><FormatCellIcon /></BigIcon>
              <BigLabel>格式</BigLabel>
              <BigLabel><Caret /></BigLabel>
            </BigBtn>
          </GroupBody>
          <GroupFooter><span />单元格<span /></GroupFooter>
        </Group>

        <Group $w={229}>
          <GroupBody $pl={6}>
            <SmallStack $w={90}>
              <SmallBtn><SmallIcon><SigmaIcon /></SmallIcon>自动求和<Tool $w={24}><Caret /></Tool></SmallBtn>
              <SmallBtn><SmallIcon><FillDownIcon /></SmallIcon>填充<Tool $w={12}><Caret /></Tool></SmallBtn>
              <SmallBtn><SmallIcon><EraserIcon /></SmallIcon>清除<Tool $w={12}><Caret /></Tool></SmallBtn>
            </SmallStack>
            <BigBtn $w={58}>
              <BigIcon><SortFilterIcon /></BigIcon>
              <BigLabel>排序和筛选</BigLabel>
              <BigLabel><Caret /></BigLabel>
            </BigBtn>
            <BigBtn $w={74}>
              <BigIcon><FindIcon /></BigIcon>
              <BigLabel>查找和选择</BigLabel>
              <BigLabel><Caret /></BigLabel>
            </BigBtn>
          </GroupBody>
          <GroupFooter><span />编辑<span /></GroupFooter>
        </Group>

        <Group $w={55}>
          <GroupBody>
            <BigBtn $w={54}>
              <BigIcon><InvoiceIcon /></BigIcon>
              <BigLabel>发票</BigLabel>
              <BigLabel>查验</BigLabel>
            </BigBtn>
          </GroupBody>
          <GroupFooter $plain>发票查验</GroupFooter>
        </Group>

        <Group $w={62}>
          <GroupBody>
            <BigBtn $w={61}>
              <BigIcon><BaiduIcon /></BigIcon>
              <BigLabel>保存到</BigLabel>
              <BigLabel>百度网盘</BigLabel>
            </BigBtn>
          </GroupBody>
          <GroupFooter><span />保存<span /></GroupFooter>
        </Group>
        <CollapseCaret />
      </Ribbon>

      <Qat>
        <QatSlot $w={18}><SaveIcon /></QatSlot>
        <QatSlot $w={30} />
        <QatSlot $w={20}><UndoIcon color="#b5b5b5" flip /></QatSlot>
        <QatSlot $w={18}><Caret $c="#c0c0c0" /></QatSlot>
        <QatSlot $w={14} />
        <QatSlot $w={20}><UndoIcon color="#3f78b5" /></QatSlot>
        <QatSlot $w={18}><Caret /></QatSlot>
        <QatSlot $w={18} />
        <QatSlot $w={20}><PrintPreviewIcon /></QatSlot>
        <QatSlot $w={34} />
        <QatSlot $w={20}><SearchDocIcon /></QatSlot>
        <QatSlot $w={28} />
        <QatSlot $w={10} $fade={0.35}><Caret /></QatSlot>
      </Qat>

      <FormulaRow>
        <NameBox>A1<Caret $c="#777" /></NameBox>
        <GripDots>⋮</GripDots>
        <FxBox>
          <FxSlot $w={37}>
            <svg width="11" height="11" viewBox="0 0 11 11" stroke="#c4c4c4" strokeWidth="1.500"><path d="M1 1l9 9M10 1l-9 9" /></svg>
          </FxSlot>
          <FxSlot $w={36}>
            <svg width="14" height="12" viewBox="0 0 14 12" fill="none" stroke="#c4c4c4" strokeWidth="2.200"><path d="M1 6l4 4 8-9" /></svg>
          </FxSlot>
          <FxSlot $w={35}><FxGlyph>fx</FxGlyph></FxSlot>
        </FxBox>
        <FormulaInput />
      </FormulaRow>

      <SheetArea>
        <Grid>
          <Corner />
          {COLUMNS.map((c, i) => <ColHead key={c} $sel={i < 10}>{c}</ColHead>)}
          {sheetRows()}
          <SelectionFrame />
        </Grid>
        <VScroll />
      </SheetArea>

      <TabsBar>
        <TabNav><NavArrow /><NavArrow $right /></TabNav>
        <SheetTab $w={64} $active>成绩表</SheetTab>
        <SheetTab $w={75}>员工信息</SheetTab>
        <TabSep />
        <SheetTab $w={62}>田字格</SheetTab>
        <TabSep />
        <SheetTab $w={111} $bg="#bdd7ee" $ml={2}>XXX公司销售额</SheetTab>
        <TabSep $ml={2} />
        <SheetTab $w={58} $bg="#f4b183" $ml={2}>课程表</SheetTab>
        <TabSep $ml={2} />
        <SheetTab $w={66}>Sheet5</SheetTab>
        <TabSep />
        <AddSheet>+</AddSheet>
        <HScrollArea>
          <HGrip>⋮</HGrip>
          <HTrack>
            <HArrowBox><NavArrow $c="#777" /></HArrowBox>
            <HThumb />
          </HTrack>
        </HScrollArea>
      </TabsBar>
      <StatusBar>
        <StatusText $w={30} $ml={8}>就绪</StatusText>
        <StatusText $w={50} $ml={15}>辅助功能</StatusText>
        <StatusText $w={60} $ml={861}>平均值: 80</StatusText>
        <StatusText $w={30} $ml={72}>80.8</StatusText>
        <StatusText $w={60} $ml={38}>计数: 269</StatusText>
        <StatusText $w={50} $ml={33}>最小值: 4</StatusText>
        <StatusText $w={60} $ml={17}>最大值: 524</StatusText>
        <StatusText $w={30} $ml={29}>求和</StatusText>
        <ViewBtn $on $ml={44} />
        <ViewBtn />
        <ViewBtn />
      </StatusBar>

      <MiniBar>
        <MiniRow>
          <Combo $w={68} $h={24}>宋体<Caret /></Combo>
          <Combo $w={50} $h={24} $num>18<Caret /></Combo>
          <Tool $w={22}><FontSizeIcon up /></Tool>
          <Tool $w={22}><FontSizeIcon /></Tool>
          <Tool $w={21}><CurrencyIcon /></Tool>
          <Tool $w={14}><Caret /></Tool>
          <Tool $w={22}><PercentGlyph>%</PercentGlyph></Tool>
          <Tool $w={20}><CommaGlyph>,</CommaGlyph></Tool>
          <Tool $w={22} $on><MergeIcon /></Tool>
        </MiniRow>
        <MiniRow>
          <Tool $w={22}><BoldGlyph>B</BoldGlyph></Tool>
          <Tool $w={22}><ItalicGlyph>I</ItalicGlyph></Tool>
          <Tool $w={22} $on><Lines type="center" /></Tool>
          <Tool $w={24}><FillIcon /></Tool>
          <Tool $w={6}><Caret /></Tool>
          <Tool $w={28}><FontColorIcon /></Tool>
          <Tool $w={8}><Caret /></Tool>
          <Tool $w={24}><BorderIcon /></Tool>
          <Tool $w={10}><Caret /></Tool>
          <Tool $w={24}><DecimalIcon inc /></Tool>
          <Tool $w={20}><DecimalIcon /></Tool>
          <Tool $w={26}><BrushIcon /></Tool>
        </MiniRow>
      </MiniBar>

      <Menu>
        <MenuItem><MenuIcon><Scissors /></MenuIcon>{MENU_KEY("剪切", "T")}</MenuItem>
        <MenuItem><MenuIcon><CopyIcon /></MenuIcon>{MENU_KEY("复制", "C")}</MenuItem>
        <MenuItem $h={23}>
          <MenuIcon><PasteIcon s={0.55} /></MenuIcon>
          <MenuHead>粘贴选项:</MenuHead>
        </MenuItem>
        <PasteRow><PasteIcon s={0.8} /></PasteRow>
        <MenuItem $h={24}><MenuIcon />{MENU_KEY("选择性粘贴", "S", "...")}</MenuItem>
        <MenuSep $h={3} />
        <MenuItem><MenuIcon><SmartLookupIcon /></MenuIcon>{MENU_KEY("智能查找", "L")}</MenuItem>
        <MenuSep />
        <MenuItem><MenuIcon />{MENU_KEY("插入", "I", "...")}</MenuItem>
        <MenuItem><MenuIcon />{MENU_KEY("删除", "D", "...")}</MenuItem>
        <MenuItem><MenuIcon />{MENU_KEY("清除内容", "N")}</MenuItem>
        <MenuSep />
        <MenuItem $off><MenuIcon><QuickAnalysisIcon /></MenuIcon>{MENU_KEY("快速分析", "Q")}</MenuItem>
        <MenuItem><MenuIcon />{MENU_KEY("筛选", "E")}<SubArrow /></MenuItem>
        <MenuItem $h={24}><MenuIcon />{MENU_KEY("排序", "O")}<SubArrow /></MenuItem>
        <MenuSep $h={3} />
        <MenuItem><MenuIcon><CommentIcon /></MenuIcon>{MENU_KEY("插入批注", "M")}</MenuItem>
        <MenuSep $h={1} />
        <MenuItem $hot><MenuIcon><FormatCellsIcon /></MenuIcon>{MENU_KEY("设置单元格格式", "F", "...")}</MenuItem>
        <MenuItem><MenuIcon />{MENU_KEY("从下拉列表中选择", "K", "...")}</MenuItem>
        <MenuItem><MenuIcon><WenIcon /></MenuIcon>{MENU_KEY("显示拼音字段", "S")}</MenuItem>
        <MenuItem><MenuIcon />{MENU_KEY("定义名称", "A", "...")}</MenuItem>
        <MenuItem><MenuIcon><LinkIcon /></MenuIcon>{MENU_KEY("超链接", "I", "...")}</MenuItem>
      </Menu>

      <Overlay $x={630} $y={562} width="104" height="104" viewBox="0 0 104 104">
        <defs>
          <filter id="arrowShadow" x="-20%" y="-20%" width="140%" height="140%">
            <feDropShadow dx="-1" dy="3" stdDeviation="1.500" floodColor="#000" floodOpacity="0.4" />
          </filter>
        </defs>
        <g filter="url(#arrowShadow)">
          <path d="M6 8L8 6 82 76 78 80z" fill="#e81414" />
          <path d="M97 96L72 87 88 70z" fill="#e81414" />
        </g>
      </Overlay>
      <Overlay $x={875} $y={673} width="13" height="20" viewBox="0 0 13 20">
        <path d="M.5.5v16l4-3.500 2.800 6 2.400-1-2.700-6H12z" fill="#fff" stroke="#111" />
      </Overlay>

      <WatermarkPanel>
        <WatermarkTitle>电脑技术网</WatermarkTitle>
        <WatermarkUrl>www.tagxp.com</WatermarkUrl>
      </WatermarkPanel>
      <TagBadge>
        <TagWord>TAG</TagWord>
        <TagSwirl width="40" height="40" viewBox="0 0 40 40" fill="none" stroke="#1f6fe0" strokeWidth="3">
          <path d="M36 6C20 2 4 12 6 26c2 10 18 12 24 2 3-7-4-13-11-9" />
        </TagSwirl>
        <TagFaint $x={76} $y={62} $s={19}>极光下载站</TagFaint>
        <TagFaint $x={71} $y={92} $s={14}>www.xz7.com</TagFaint>
      </TagBadge>
    </Page>
  );
}
